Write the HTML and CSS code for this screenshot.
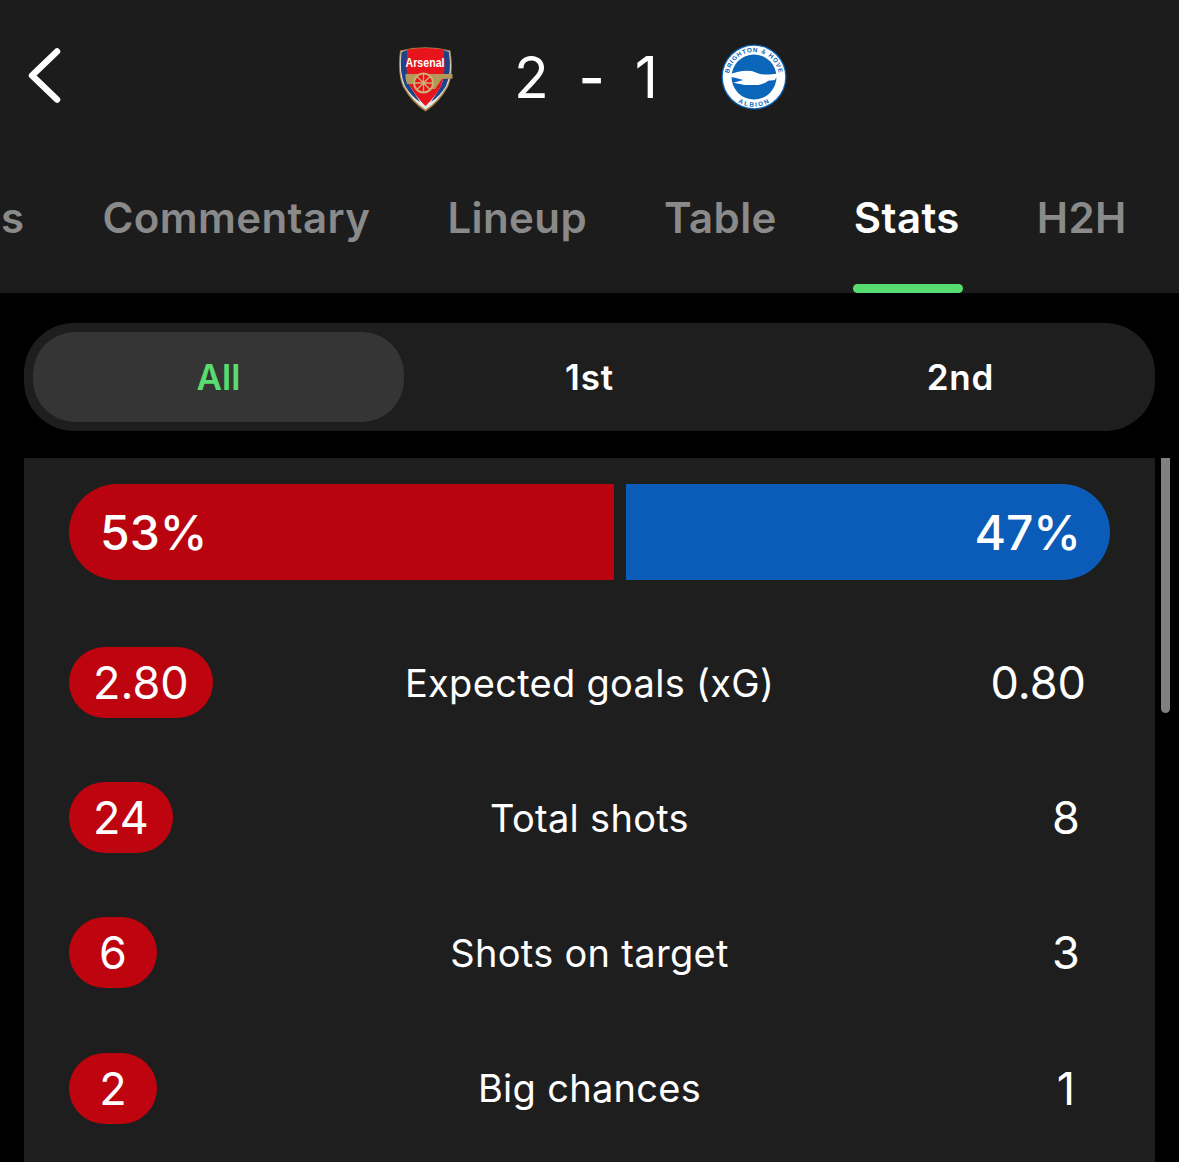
FILE: index.html
```html
<!DOCTYPE html>
<html lang="en">
<head>
<meta charset="utf-8">
<title>Arsenal 2 - 1 Brighton</title>
<link rel="stylesheet" href="styles.css">
</head>
<body>
<div class="page">
  <header class="top">
    <div class="match">
      <svg class="back" viewBox="0 0 36 58" width="36" height="58" aria-hidden="true"><path d="M30 4.500 L5 28.500 L30 52.500" fill="none" stroke="#fff" stroke-width="6.500" stroke-linecap="round" stroke-linejoin="round"/></svg>
      <svg class="crest-a" viewBox="0 0 56 66" width="56" height="66" aria-hidden="true">
        <path d="M2 4.500 Q27 -2 52.500 4.500 Q56 27 50 41 Q41 57 27.500 65.500 Q14 57 5 41 Q-1 27 2 4.500Z" fill="#a8864a"/>
        <path d="M3 5.500 Q27 -.5 51.500 5.500 Q55 27 49 40 Q40 55.500 27.500 63.500 Q15 55.500 6 40 Q0 27 3 5.500Z" fill="#e8e8e8"/>
        <path d="M3.500 6 L10 4 Q7 28 12 40 L22 56 Q13 50 7 40 Q1 27 3.500 6Z M51 6 L45 4 Q48 28 43 40 L33 56 Q42 50 48 40 Q54 27 51 6Z" fill="#1d4388"/>
        <path d="M9.500 3.500 Q27 .5 45.500 3.500 Q48.500 27 43 40 Q36 52 27.500 60 Q19 52 12 40 Q6.500 27 9.500 3.500Z" fill="#e8141c"/>
        <path d="M7.500 28 H54.500 V32.500 L44 33 L37 43 H20 L16 38 H9 Q7 32 7.500 28Z" fill="#b39858"/>
        <circle cx="25.500" cy="37" r="9.500" fill="#e8141c" stroke="#cbb173" stroke-width="2"/>
        <path d="M25.500 28 V46 M16.500 37 H34.500 M19 30.500 L32 43.500 M32 30.500 L19 43.500" stroke="#cbb173" stroke-width="1.300"/>
        <text class="crest-a-name" x="27" y="21" text-anchor="middle" textLength="39" lengthAdjust="spacingAndGlyphs">Arsenal</text>
      </svg>
      <div class="score"><span>2</span><span class="dash">-</span><span>1</span></div>
      <svg class="crest-b" viewBox="0 0 66 66" width="66" height="66" aria-hidden="true">
        <circle cx="33" cy="33" r="32.500" fill="#0b65b8"/>
        <circle cx="33" cy="33" r="31.200" fill="#fff"/>
        <circle cx="33" cy="33" r="22.500" fill="#0b65b8"/>
        <path id="arc-top" d="M8.500 38 A25 25 0 1 1 57.500 38" fill="none"/>
        <path id="arc-bottom" d="M9 40 A25 25 0 0 0 57 40" fill="none"/>
        <text class="crest-b-text"><textPath href="#arc-top" startOffset="50%" text-anchor="middle">BRIGHTON &amp; HOVE</textPath></text>
        <text class="crest-b-text"><textPath href="#arc-bottom" startOffset="50%" text-anchor="middle" dominant-baseline="hanging">ALBION</textPath></text>
        <path d="M3 31.700 Q10 29.500 17.300 27.700 Q24 26 30.700 27 L39 30 Q45 31 50.700 30.300 L63.300 28.700 L54.700 34.300 L54 36 L47.300 36.700 Q43 40 37.300 41 L24 41 L12.300 38.700 L22.300 36 L14 33.700 Z" fill="#fff"/>
      </svg>
    </div>
    <nav class="tabs">
      <div class="tab-strip">
        <span class="tab tab-clipped">Stats</span>
        <span class="tab">Commentary</span>
        <span class="tab">Lineup</span>
        <span class="tab">Table</span>
        <span class="tab is-active">Stats</span>
        <span class="tab">H2H</span>
      </div>
    </nav>
  </header>

  <div class="segment">
    <span class="seg is-active">All</span>
    <span class="seg">1st</span>
    <span class="seg">2nd</span>
  </div>

  <div class="body">
    <main class="card">
      <div class="poss">
        <div class="poss-home">53%</div>
        <div class="poss-away">47%</div>
      </div>
      <div class="row">
        <div class="home"><span class="pill is-leader">2.80</span></div>
        <div class="label">Expected goals (xG)</div>
        <div class="away"><span class="pill">0.80</span></div>
      </div>
      <div class="row">
        <div class="home"><span class="pill is-leader">24</span></div>
        <div class="label">Total shots</div>
        <div class="away"><span class="pill">8</span></div>
      </div>
      <div class="row">
        <div class="home"><span class="pill is-leader">6</span></div>
        <div class="label">Shots on target</div>
        <div class="away"><span class="pill">3</span></div>
      </div>
      <div class="row">
        <div class="home"><span class="pill is-leader">2</span></div>
        <div class="label">Big chances</div>
        <div class="away"><span class="pill">1</span></div>
      </div>
    </main>
    <div class="scrollbar"></div>
  </div>
</div>
</body>
</html>
```
FILE: styles.css
```css
* { box-sizing: border-box; }
html, body { margin: 0; padding: 0; background: #000; }
body { font-family: Inter, "Liberation Sans", sans-serif; color: #fff; }
.page { width: 1179px; height: 1162px; overflow: hidden; display: flex; flex-direction: column; }

.top { height: 293px; background: #1c1c1c; flex: none; }
.match { height: 155px; padding-left: 5.500px; display: flex; align-items: center; justify-content: center; position: relative; }
.back { position: absolute; left: 27px; top: 47px; }
.crest-a { margin-right: 60.500px; margin-top: 3px; }
.crest-a-name { font: 700 13px "Liberation Sans", sans-serif; fill: #fff; }
.crest-b { margin-left: 63px; margin-top: -1px; }
.crest-b-text { font: 700 6.300px "Liberation Sans", sans-serif; fill: #0b65b8; letter-spacing: .8px; }
.score { font-size: 57px; font-weight: 400; display: flex; line-height: 1; width: 144px; justify-content: space-between; }
.dash { font-weight: 500; }

.tabs { height: 138px; overflow: hidden; position: relative; }
.tab-strip { display: flex; gap: 77px; position: absolute; left: -85.500px; top: 0; height: 138px; white-space: nowrap; }
.tab { font-size: 42px; font-weight: 600; letter-spacing: .4px; color: #8a8a8a; line-height: 48px; padding-top: 39px; position: relative; }
.tab-clipped { letter-spacing: 1.400px; }
.tab.is-active { color: #fff; }
.tab.is-active::after { content: ""; position: absolute; left: -1px; right: -3px; bottom: 0; height: 9px; background: #58dc6f; border-radius: 4.500px; }

.segment { margin: 30px 24px 0; height: 108px; border-radius: 50px; background: #1e1e1e; padding: 9px; display: grid; grid-template-columns: repeat(3, 1fr); flex: none; }
.seg { display: flex; align-items: center; justify-content: center; font-size: 35px; font-weight: 600; letter-spacing: .8px; border-radius: 42px; }
.seg.is-active { background: #353535; color: #58dc6f; letter-spacing: 0; }

.body { flex: 1; margin-top: 27px; display: flex; min-height: 0; padding-left: 24px; }
.card { width: 1131px; background: #1e1e1e; padding: 26px 45px 0; overflow: hidden; }
.scrollbar { width: 9px; height: 255px; margin-left: 6px; background: #808080; border-radius: 0 0 5px 5px; }

.poss { display: flex; gap: 12px; height: 96px; font-size: 48px; font-weight: 500; line-height: 98px; }
.poss-home { width: 545px; background: #b9040f; border-radius: 48px 0 0 48px; padding-left: 31px; }
.poss-away { flex: 1; background: #0b5cb8; border-radius: 0 48px 48px 0; padding-right: 29px; text-align: right; }

.row { display: grid; grid-template-columns: 1fr auto 1fr; align-items: center; height: 71.200px; margin-top: 64px; }
.poss + .row { margin-top: 67px; }
.home { justify-self: start; }
.away { justify-self: end; }
.pill { display: block; height: 71px; line-height: 71px; padding: 0 24px; border-radius: 36px; font-size: 45px; min-width: 88px; text-align: center; }
.pill.is-leader { background: #be040f; }
.label { font-size: 38px; letter-spacing: .3px; text-align: center; }
```
